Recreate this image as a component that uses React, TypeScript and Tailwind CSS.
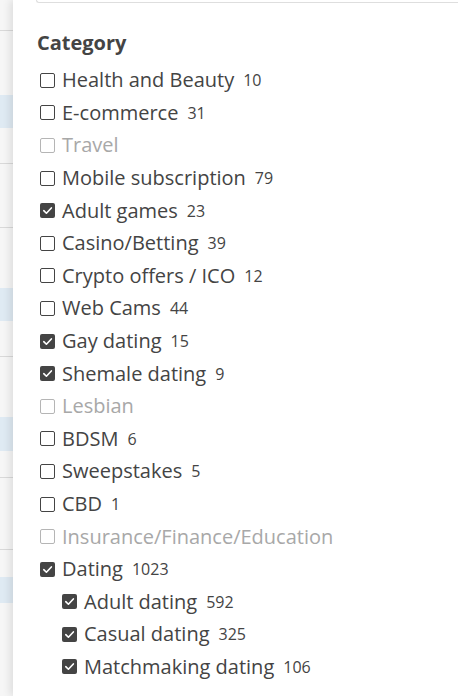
import React from "react";

type Item = { label: string; count?: number; checked?: boolean; disabled?: boolean; sub?: boolean };

const items: Item[] = [
  { label: "Health and Beauty", count: 10 },
  { label: "E-commerce", count: 31 },
  { label: "Travel", disabled: true },
  { label: "Mobile subscription", count: 79 },
  { label: "Adult games", count: 23, checked: true },
  { label: "Casino/Betting", count: 39 },
  { label: "Crypto offers / ICO", count: 12 },
  { label: "Web Cams", count: 44 },
  { label: "Gay dating", count: 15, checked: true },
  { label: "Shemale dating", count: 9, checked: true },
  { label: "Lesbian", disabled: true },
  { label: "BDSM", count: 6 },
  { label: "Sweepstakes", count: 5 },
  { label: "CBD", count: 1 },
  { label: "Insurance/Finance/Education", disabled: true },
  { label: "Dating", count: 1023, checked: true },
  { label: "Adult dating", count: 592, checked: true, sub: true },
  { label: "Casual dating", count: 325, checked: true, sub: true },
  { label: "Matchmaking dating", count: 106, checked: true, sub: true },
];

function Box({ checked, disabled }: { checked?: boolean; disabled?: boolean }) {
  if (checked) {
    return (
      <span className="w-[15px] h-[15px] rounded-[2px] bg-[#444444] flex items-center justify-center shrink-0">
        <svg width="11" height="11" viewBox="0 0 10 10" fill="none">
          <path d="M1.6 5.2 L4 7.5 L8.5 2.7" stroke="white" strokeWidth="1.5" strokeLinecap="round" strokeLinejoin="round" />
        </svg>
      </span>
    );
  }
  return (
    <span
      className={
        "w-[15px] h-[15px] rounded-[2px] border-[1.5px] shrink-0 " +
        (disabled ? "border-[#b5b5b5]" : "border-[#444444]")
      }
    />
  );
}

const strip: { h: number; c: string }[] = [
  { h: 31, c: "bg-[#f6f6f6] border-b border-[#d9d9d9]" },
  { h: 64, c: "bg-[#f6f6f6]" },
  { h: 33, c: "bg-[#dfeaf3]" },
  { h: 36, c: "bg-[#f6f6f6] border-b border-[#d9d9d9]" },
  { h: 64, c: "bg-[#f6f6f6] border-b border-[#d9d9d9]" },
  { h: 60, c: "bg-[#f6f6f6]" },
  { h: 33, c: "bg-[#dfeaf3]" },
  { h: 36, c: "bg-[#f6f6f6] border-b border-[#d9d9d9]" },
  { h: 60, c: "bg-[#f6f6f6]" },
  { h: 34, c: "bg-[#dfeaf3]" },
  { h: 27, c: "bg-[#f6f6f6] border-b border-[#d9d9d9]" },
  { h: 72, c: "bg-[#f6f6f6] border-b border-[#d9d9d9]" },
  { h: 27, c: "bg-[#f6f6f6]" },
  { h: 26, c: "bg-[#dfeaf3]" },
  { h: 30, c: "bg-[#f6f6f6]" },
];

export default function App() {
  return (
    <div
      className="w-[458px] h-[696px] flex overflow-hidden bg-white"
      style={{ fontFamily: '"Open Sans", "Noto Sans", sans-serif' }}
    >
      <div className="w-[13px] shrink-0 flex flex-col">
        {strip.map((s, i) => (
          <div key={i} className={"box-border " + s.c} style={{ height: s.h }} />
        ))}
        <div className="flex-1 bg-[#f6f6f6]" />
      </div>
      <div className="flex-1 bg-white shadow-[-3px_0_8px_rgba(0,0,0,0.10)] relative z-10 flex flex-col">
        <div className="ml-[23px] h-[3px] border-b border-l border-[#dedede] rounded-bl-[4px]" />
        <div className="pl-[24px] pt-[27px] text-[20px] font-bold leading-[26px] text-[#444444]">Category</div>
        <div className="pl-[27px] pt-[8px] flex flex-col">
          {items.map((it, i) => (
            <div key={i} className={"flex items-center h-[32.6px] " + (it.sub ? "pl-[22px]" : "")}>
              <Box checked={it.checked} disabled={it.disabled} />
              <span
                className={
                  "ml-[7px] text-[20px] leading-none whitespace-nowrap " +
                  (it.disabled ? "text-[#a8a8a8]" : "text-[#444444]")
                }
              >
                {it.label}
              </span>
              {it.count !== undefined && (
                <span className="ml-[9px] text-[16px] leading-none text-[#444444]">{it.count}</span>
              )}
            </div>
          ))}
        </div>
      </div>
    </div>
  );
}
